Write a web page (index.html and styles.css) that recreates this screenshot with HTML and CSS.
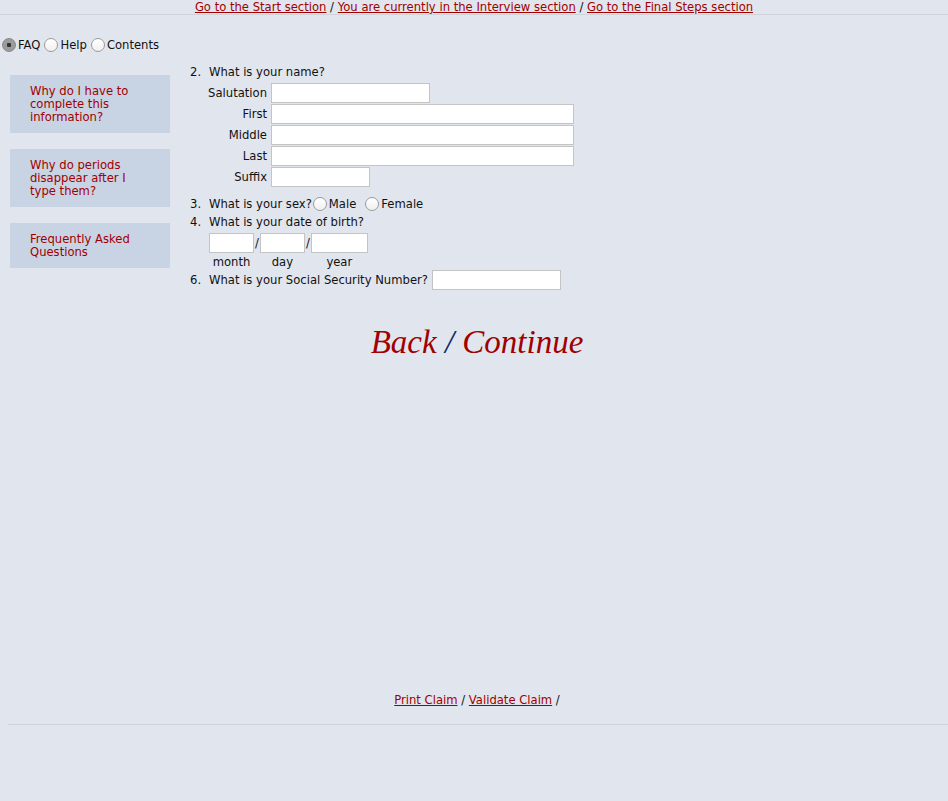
FILE: index.html
```html
<!DOCTYPE html>
<html>
<head>
<meta charset="utf-8">
<link rel="stylesheet" href="styles.css">
</head>
<body>
<div class="topnav">
  <a href="#">Go to the Start section</a> / <a href="#">You are currently in the Interview section</a> / <a href="#">Go to the Final Steps section</a>
</div>
<div class="tabs">
  <label class="tab"><input type="radio" name="tab" checked>FAQ</label>
  <label class="tab"><input type="radio" name="tab">Help</label>
  <label class="tab"><input type="radio" name="tab">Contents</label>
</div>
<div class="main">
  <div class="sidebar">
    <a class="faq" href="#">Why do I have to complete this information?</a>
    <a class="faq" href="#">Why do periods disappear after I type them?</a>
    <a class="faq" href="#">Frequently Asked Questions</a>
  </div>
  <div class="content">
    <div class="q">
      <span class="num">2.</span>
      <div class="qbody">
        <div class="qtext">What is your name?</div>
        <div class="namegrid">
          <span class="lbl">Salutation</span><input class="inp w158" type="text">
          <span class="lbl">First</span><input class="inp w302" type="text">
          <span class="lbl">Middle</span><input class="inp w302" type="text">
          <span class="lbl">Last</span><input class="inp w302" type="text">
          <span class="lbl">Suffix</span><input class="inp w98" type="text">
        </div>
      </div>
    </div>
    <div class="q sexq">
      <span class="num">3.</span>
      <div class="qbody row">
        <span class="qtext">What is your sex?</span>
        <label class="opt"><input type="radio" name="sex">Male</label>
        <label class="opt"><input type="radio" name="sex">Female</label>
      </div>
    </div>
    <div class="q">
      <span class="num">4.</span>
      <div class="qbody">
        <div class="qtext">What is your date of birth?</div>
        <div class="dob">
          <div class="dobcol"><input class="inp w44" type="text"><span>month</span></div>
          <span class="slash">/</span>
          <div class="dobcol"><input class="inp w44" type="text"><span>day</span></div>
          <span class="slash">/</span>
          <div class="dobcol"><input class="inp w56" type="text"><span>year</span></div>
        </div>
      </div>
    </div>
    <div class="q ssnq">
      <span class="num">6.</span>
      <div class="qbody row">
        <span class="qtext">What is your Social Security Number?</span>
        <input class="inp w128 ssn" type="text">
      </div>
    </div>
  </div>
</div>
<div class="nav">
  <a href="#">Back</a> <span class="sep">/</span> <a href="#">Continue</a>
</div>
<div class="footer">
  <a href="#">Print Claim</a> / <a href="#">Validate Claim</a> /
</div>
<div class="rule"></div>
</body>
</html>
```
FILE: styles.css
```css
html, body {
  margin: 0;
  padding: 0;
  background: #e1e6ee;
}
body {
  font-family: "DejaVu Sans", Verdana, sans-serif;
  font-size: 11.6px;
  color: #111;
  height: 801px;
}
a {
  color: #a00000;
}
.topnav {
  text-align: center;
  height: 13px;
  padding-top: 1px;
  line-height: 13px;
  border-bottom: 1px solid #cfd4db;
}
.tabs {
  display: flex;
  align-items: center;
  margin-top: 22px;
  margin-left: 2px;
  height: 16px;
}
.tab {
  display: flex;
  align-items: center;
  margin-right: 4px;
}
input[type=radio] {
  appearance: none;
  -webkit-appearance: none;
  width: 14px;
  height: 14px;
  margin: 0 2px 0 0;
  border-radius: 50%;
  background: linear-gradient(#fff, #f0f0f0);
  border: 1px solid #9a9a9a;
  box-sizing: border-box;
}
input[type=radio]:checked {
  background: radial-gradient(circle, #333 0 2px, #9b9b9b 2.5px);
  border-color: #888;
}
.main {
  display: flex;
  margin-top: 11px;
}
.sidebar {
  width: 160px;
  margin-left: 10px;
  display: flex;
  flex-direction: column;
  gap: 16px;
  padding-top: 11px;
}
.faq {
  display: block;
  background: #c8d3e4;
  padding: 10px 20px 9px 20px;
  text-decoration: none;
  line-height: 13px;
  color: #a00000;
}
.content {
  margin-left: 20px;
}
.q {
  display: flex;
}
.num {
  width: 19px;
  line-height: 16px;
}
.qtext {
  line-height: 16px;
}
.namegrid {
  display: grid;
  grid-template-columns: 58px auto;
  column-gap: 4px;
  row-gap: 1px;
  margin-top: 3px;
  align-items: center;
  justify-items: start;
  margin-bottom: 8px;
}
.lbl {
  justify-self: end;
  white-space: nowrap;
}
.inp {
  height: 20px;
  border: 1px solid #c4c4c4;
  background: #fff;
  box-sizing: border-box;
  margin: 0;
  padding: 0;
}
.w158 { width: 159px; }
.w302 { width: 303px; }
.w98 { width: 99px; }
.w44 { width: 45px; }
.w56 { width: 57px; }
.w128 { width: 129px; }
.row {
  display: flex;
  align-items: center;
}
.sexq { height: 18px; align-items: center; margin-bottom: 1px; }
.sexq .num { line-height: 18px; }
.opt {
  display: flex;
  align-items: center;
  margin-left: 1px;
  margin-right: 8px;
}
.dob {
  display: flex;
  align-items: flex-start;
  margin-top: 3px;
}
.dobcol {
  display: flex;
  flex-direction: column;
  align-items: center;
}
.dobcol span { line-height: 16px; padding-top: 1px; }
.slash { line-height: 20px; margin: 0 1px; }
.ssnq { align-items: center; }
.ssn { margin-left: 4px; }
.nav {
  text-align: center;
  font-family: "Liberation Serif", Georgia, serif;
  font-style: italic;
  font-size: 33px;
  line-height: 38px;
  margin-top: 33px;
  padding-left: 6px;
  color: #0c2a6a;
}
.nav a { text-decoration: none; color: #a00000; }
.footer {
  text-align: center;
  margin-top: 332px;
  line-height: 14px;
  padding-left: 6px;
}
.rule {
  margin: 17px 0 0 8px;
  border-top: 1px solid #cfd4db;
}
```
